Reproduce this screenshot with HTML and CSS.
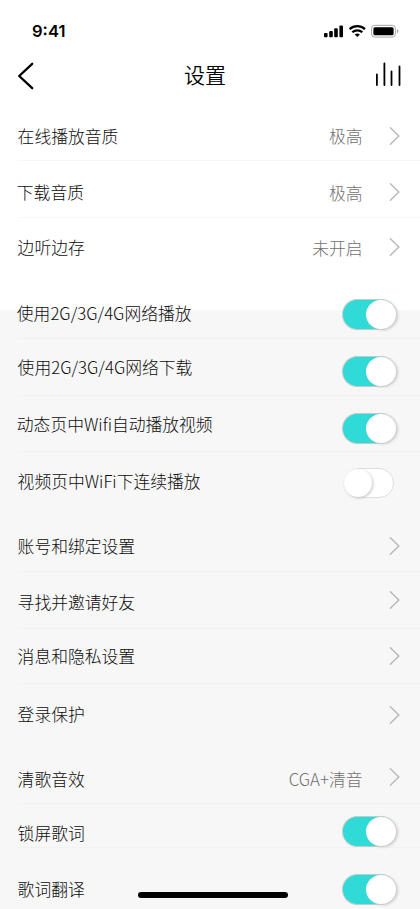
FILE: index.html
```
<!DOCTYPE html>
<html lang="zh-CN">
<head>
<meta charset="utf-8">
<meta name="viewport" content="width=device-width, initial-scale=1">
<title>设置</title>
<link rel="stylesheet" href="styles.css">
</head>
<body>
<svg class="defs" aria-hidden="true"><symbol id="chevron" viewBox="0 0 12 20"><path d="M1.4 1.8 9.8 10 1.4 18.2" fill="none" stroke="#bababa" stroke-width="1.5" stroke-linecap="round"/></symbol></svg>
<div class="screen">
  <div class="status">
    <span class="time">9:41</span>
    <svg class="status-icons" width="78" height="16" viewBox="0 0 78 16">
      <rect x="1" y="9" width="3.6" height="4.2" rx="1"/>
      <rect x="6.2" y="7" width="3.6" height="6.2" rx="1"/>
      <rect x="11.2" y="4.2" width="3.6" height="9" rx="1"/>
      <rect x="16.4" y="1.5" width="3.6" height="11.7" rx="1"/>
      <g fill="none" stroke="#000" stroke-width="2.2"><path d="M26.6 5.1a11.4 11.4 0 0 1 15.4 0"/><path d="M29.3 8.3a7.4 7.4 0 0 1 10 0"/></g>
      <path d="M31.7 10.5a4 4 0 0 1 5.2 0L34.3 13z"/>
      <rect x="48.6" y="1.3" width="23.8" height="11.8" rx="3.2" fill="none" stroke="#a6a6a6"/>
      <rect x="50.4" y="3.2" width="20.2" height="8" rx="1.5"/>
      <path d="M74 5.2c2 .8 2 3.2 0 4z" fill="#a6a6a6"/>
    </svg>
  </div>
  <header class="nav">
    <svg width="18" height="30" viewBox="0 0 18 30"><path d="M16.2 2.8 3.2 15 16.2 27.2" fill="none" stroke="#000" stroke-width="2.3" stroke-linecap="round" stroke-linejoin="round"/></svg>
    <h1>设置</h1>
    <svg width="28" height="26" viewBox="0 0 28 26"><path d="M1.9 13.5V24M9.4 2.5V24M16.5 10.5V24M24.5 5.5V24" fill="none" stroke="#000" stroke-width="1.8" stroke-linecap="round"/></svg>
  </header>
  <main>
    <section>
      <div class="row quality"><span class="label">在线播放音质</span><span class="value">极高</span><svg class="chev"><use href="#chevron"/></svg></div>
      <div class="row download"><span class="label">下载音质</span><span class="value">极高</span><svg class="chev"><use href="#chevron"/></svg></div>
      <div class="row cache"><span class="label">边听边存</span><span class="value">未开启</span><svg class="chev"><use href="#chevron"/></svg></div>
    </section>
    <section>
      <div class="row net-play"><span class="label">使用2G/3G/4G网络播放</span><span class="toggle on"><i></i></span></div>
      <div class="row net-down"><span class="label">使用2G/3G/4G网络下载</span><span class="toggle on"><i></i></span></div>
      <div class="row wifi-auto"><span class="label">动态页中Wifi自动播放视频</span><span class="toggle on"><i></i></span></div>
      <div class="row wifi-next"><span class="label">视频页中WiFi下连续播放</span><span class="toggle off"><i></i></span></div>
    </section>
    <section>
      <div class="row account"><span class="label">账号和绑定设置</span><svg class="chev"><use href="#chevron"/></svg></div>
      <div class="row friends"><span class="label">寻找并邀请好友</span><svg class="chev"><use href="#chevron"/></svg></div>
      <div class="row privacy"><span class="label">消息和隐私设置</span><svg class="chev"><use href="#chevron"/></svg></div>
      <div class="row login"><span class="label">登录保护</span><svg class="chev"><use href="#chevron"/></svg></div>
    </section>
    <section>
      <div class="row effect"><span class="label">清歌音效</span><span class="value">CGA+清音</span><svg class="chev"><use href="#chevron"/></svg></div>
      <div class="row lock"><span class="label">锁屏歌词</span><span class="toggle on"><i></i></span></div>
      <div class="row translate"><span class="label">歌词翻译</span><span class="toggle on"><i></i></span></div>
    </section>
  </main>
  <div class="home"></div>
</div>
</body>
</html>
```
FILE: styles.css
```
* { box-sizing: border-box; }
body { margin: 0; font-family: "Noto Sans CJK SC", sans-serif; }
.defs { position: absolute; width: 0; height: 0; }
.screen {
  position: relative;
  width: 420px;
  height: 909px;
  overflow: hidden;
  background: linear-gradient(#fff 310px, #f7f7f7 311px);
}
.status {
  display: flex;
  justify-content: space-between;
  height: 52px;
  padding: 21px 19px 0 32px;
}
.time { font: 600 16.6px/20px Inter, sans-serif; }
.status-icons { margin-top: 3px; }
.nav {
  display: flex;
  justify-content: space-between;
  align-items: flex-start;
  height: 52px;
  padding: 9px 17px 0 16px;
}
.nav h1 {
  margin: -2px 0 0 1px;
  font-size: 21px;
  line-height: 30px;
  font-weight: 350;
}
.row {
  display: flex;
  align-items: flex-start;
  height: var(--h, 57px);
  margin-left: 18px;
  border-bottom: 1px solid #f2f2f2;
}
section:first-child .row { border-color: #f7f7f7; }
main .row:last-child { border-bottom: 0; }
.label, .value {
  font-size: 16.8px;
  line-height: 24px;
  font-weight: 300;
  white-space: nowrap;
}
.label { flex: 1; margin: var(--label, 20px) 0 0 -0.4px; color: #0c0c0c; }
.value { margin: var(--value, 20px) 26.5px 0 0; color: #707070; }
.chev {
  flex: none;
  width: 12px;
  height: 20px;
  margin: var(--mark, 22px) 19px 0 0;
}
.toggle {
  flex: none;
  display: flex;
  margin-top: var(--mark, 17px);
  border-radius: 16px;
}
.toggle.on {
  justify-content: flex-end;
  width: 54px;
  height: 31px;
  margin-right: 24px;
  padding: 1px;
  border: 1px solid #c3cccb;
  border-right: 0;
  background: #2fdad7;
  box-shadow: 1px 0 1px #e4e4e4;
}
.toggle i { border-radius: 50%; background: #fff; }
.toggle.on i {
  width: 30px;
  height: 29px;
  margin: -1px -1px 0 0;
  box-shadow: 2px 1px 3px #d2cccc;
}
.toggle.off {
  width: 50px;
  height: 30px;
  margin-right: 26px;
  border: 1px solid #dedede;
  background: #fff;
}
.toggle.off i { width: 28px; height: 28px; margin-left: -1px; box-shadow: 1px 1px 3px #c8c4c4; }

.quality { --label: 20px; --value: 20px; --mark: 22.3px; }
.download { --label: 19px; --value: 20px; --mark: 21.3px; }
.cache { --h: 64px; --label: 17px; --value: 18px; --mark: 19.3px; }
.net-play { --label: 19px; --mark: 17px; }
.net-down { --label: 16px; --mark: 17px; }
.wifi-auto { --h: 56px; --label: 16px; --mark: 17px; }
.wifi-next { --h: 63px; --label: 17px; --mark: 16px; }
.account { --label: 19px; --mark: 21.3px; }
.friends { --label: 18px; --mark: 17.6px; }
.privacy { --h: 55px; --label: 15px; --mark: 17px; }
.login { --h: 63px; --label: 18px; --mark: 21px; }
.effect { --label: 20px; --value: 20px; --mark: 19.6px; }
.lock { --h: 44px; --label: 17px; --mark: 12px; }
.translate { --h: 61px; --label: 29px; --mark: 26px; }
.download .label, .net-play .label, .wifi-auto .label { margin-left: -1.2px; }

.home {
  position: absolute;
  left: 138px;
  bottom: 11px;
  width: 150px;
  height: 6px;
  border-radius: 3px;
  background: #000;
}
```
